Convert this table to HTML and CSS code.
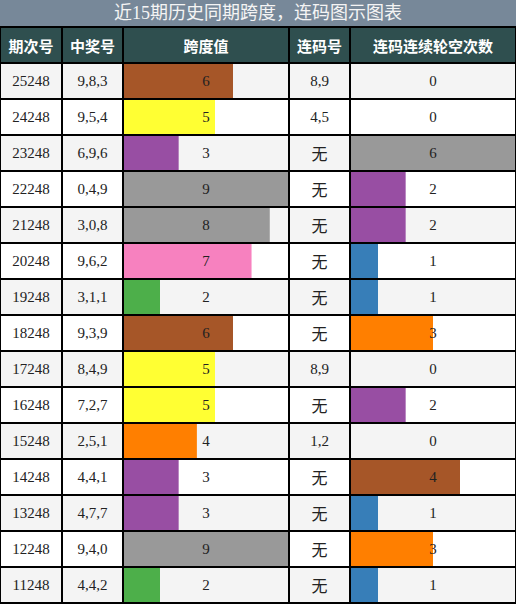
FILE: index.html
```html
<!DOCTYPE html>
<html lang="zh">

<head>
    <meta charset="UTF-8">
    <meta name="viewport" content="width=device-width, initial-scale=1.0">
    <title>近15期历史同期跨度</title>
    <link rel="stylesheet" href="styles.css">
</head>

<body>
    <div class="chart">
        <div class="chart-title">近15期历史同期跨度，连码图示图表</div>
        <table class="chart-table">
            <thead>
                <tr>
                    <th class="col-issue">期次号</th>
                    <th class="col-num">中奖号</th>
                    <th class="col-span">跨度值</th>
                    <th class="col-pair">连码号</th>
                    <th class="col-gap">连码连续轮空次数</th>
                </tr>
            </thead>
            <tbody>
                <tr>
                    <td>25248</td><td>9,8,3</td>
                    <td class="bar bar-brown" style="background-size: 66.67% 100%">6</td>
                    <td>8,9</td>
                    <td>0</td>
                </tr>
                <tr>
                    <td>24248</td><td>9,5,4</td>
                    <td class="bar bar-yellow" style="background-size: 55.56% 100%">5</td>
                    <td>4,5</td>
                    <td>0</td>
                </tr>
                <tr>
                    <td>23248</td><td>6,9,6</td>
                    <td class="bar bar-purple" style="background-size: 33.33% 100%">3</td>
                    <td class="none">无</td>
                    <td class="bar bar-gray" style="background-size: 100% 100%">6</td>
                </tr>
                <tr>
                    <td>22248</td><td>0,4,9</td>
                    <td class="bar bar-gray" style="background-size: 100% 100%">9</td>
                    <td class="none">无</td>
                    <td class="bar bar-purple" style="background-size: 33.33% 100%">2</td>
                </tr>
                <tr>
                    <td>21248</td><td>3,0,8</td>
                    <td class="bar bar-gray" style="background-size: 88.89% 100%">8</td>
                    <td class="none">无</td>
                    <td class="bar bar-purple" style="background-size: 33.33% 100%">2</td>
                </tr>
                <tr>
                    <td>20248</td><td>9,6,2</td>
                    <td class="bar bar-pink" style="background-size: 77.78% 100%">7</td>
                    <td class="none">无</td>
                    <td class="bar bar-blue" style="background-size: 16.67% 100%">1</td>
                </tr>
                <tr>
                    <td>19248</td><td>3,1,1</td>
                    <td class="bar bar-green" style="background-size: 22.22% 100%">2</td>
                    <td class="none">无</td>
                    <td class="bar bar-blue" style="background-size: 16.67% 100%">1</td>
                </tr>
                <tr>
                    <td>18248</td><td>9,3,9</td>
                    <td class="bar bar-brown" style="background-size: 66.67% 100%">6</td>
                    <td class="none">无</td>
                    <td class="bar bar-orange" style="background-size: 50% 100%">3</td>
                </tr>
                <tr>
                    <td>17248</td><td>8,4,9</td>
                    <td class="bar bar-yellow" style="background-size: 55.56% 100%">5</td>
                    <td>8,9</td>
                    <td>0</td>
                </tr>
                <tr>
                    <td>16248</td><td>7,2,7</td>
                    <td class="bar bar-yellow" style="background-size: 55.56% 100%">5</td>
                    <td class="none">无</td>
                    <td class="bar bar-purple" style="background-size: 33.33% 100%">2</td>
                </tr>
                <tr>
                    <td>15248</td><td>2,5,1</td>
                    <td class="bar bar-orange" style="background-size: 44.44% 100%">4</td>
                    <td>1,2</td>
                    <td>0</td>
                </tr>
                <tr>
                    <td>14248</td><td>4,4,1</td>
                    <td class="bar bar-purple" style="background-size: 33.33% 100%">3</td>
                    <td class="none">无</td>
                    <td class="bar bar-brown" style="background-size: 66.67% 100%">4</td>
                </tr>
                <tr>
                    <td>13248</td><td>4,7,7</td>
                    <td class="bar bar-purple" style="background-size: 33.33% 100%">3</td>
                    <td class="none">无</td>
                    <td class="bar bar-blue" style="background-size: 16.67% 100%">1</td>
                </tr>
                <tr>
                    <td>12248</td><td>9,4,0</td>
                    <td class="bar bar-gray" style="background-size: 100% 100%">9</td>
                    <td class="none">无</td>
                    <td class="bar bar-orange" style="background-size: 50% 100%">3</td>
                </tr>
                <tr>
                    <td>11248</td><td>4,4,2</td>
                    <td class="bar bar-green" style="background-size: 22.22% 100%">2</td>
                    <td class="none">无</td>
                    <td class="bar bar-blue" style="background-size: 16.67% 100%">1</td>
                </tr>
            </tbody>
        </table>
    </div>
</body>

</html>
```

FILE: styles.css
```css
body {
    margin: 0;
    padding: 0;
    font-family: "Liberation Serif", "Noto Sans CJK SC", serif;
    color: #222;
}

.chart {
    width: 516px;
}

.chart-title {
    height: 26px;
    line-height: 26px;
    background-color: #778899;
    color: #f4f4f4;
    font-size: 18px;
    text-align: center;
    border-bottom: 2px solid #000;
}

.chart-table {
    width: 516px;
    table-layout: fixed;
    border-collapse: separate;
    border-spacing: 0;
}

.chart-table th,
.chart-table td {
    box-sizing: border-box;
    height: 36px;
    padding: 0;
    text-align: center;
    border-right: 2px solid #000;
    border-bottom: 2px solid #000;
}

.chart-table th:first-child,
.chart-table td:first-child {
    border-left: 1px solid #000;
}

.chart-table th:last-child,
.chart-table td:last-child {
    border-right: 1px solid #000;
}

.chart-table th {
    background-color: #2f4f4f;
    color: #fff;
    font-family: "Noto Sans CJK SC", sans-serif;
    font-size: 15px;
    font-weight: bold;
}

.col-issue { width: 63px; }
.col-num { width: 61px; }
.col-span { width: 166px; }
.col-pair { width: 61px; }
.col-gap { width: 165px; }

.chart-table td {
    font-size: 15px;
    background-color: #fff;
}

.chart-table tbody tr:nth-child(odd) td {
    background-color: #f4f4f4;
}

.chart-table td.none {
    font-size: 16px;
}

/* bars drawn as a sized background layer, width set per cell */
.chart-table td.bar {
    background-repeat: no-repeat;
    background-position: left top;
}

.bar-brown { background-image: linear-gradient(#a65628, #a65628); }
.bar-yellow { background-image: linear-gradient(#ffff33, #ffff33); }
.bar-purple { background-image: linear-gradient(#984ea3, #984ea3); }
.bar-gray { background-image: linear-gradient(#999999, #999999); }
.bar-pink { background-image: linear-gradient(#f781bf, #f781bf); }
.bar-green { background-image: linear-gradient(#4daf4a, #4daf4a); }
.bar-orange { background-image: linear-gradient(#ff7f00, #ff7f00); }
.bar-blue { background-image: linear-gradient(#377eb8, #377eb8); }
```
